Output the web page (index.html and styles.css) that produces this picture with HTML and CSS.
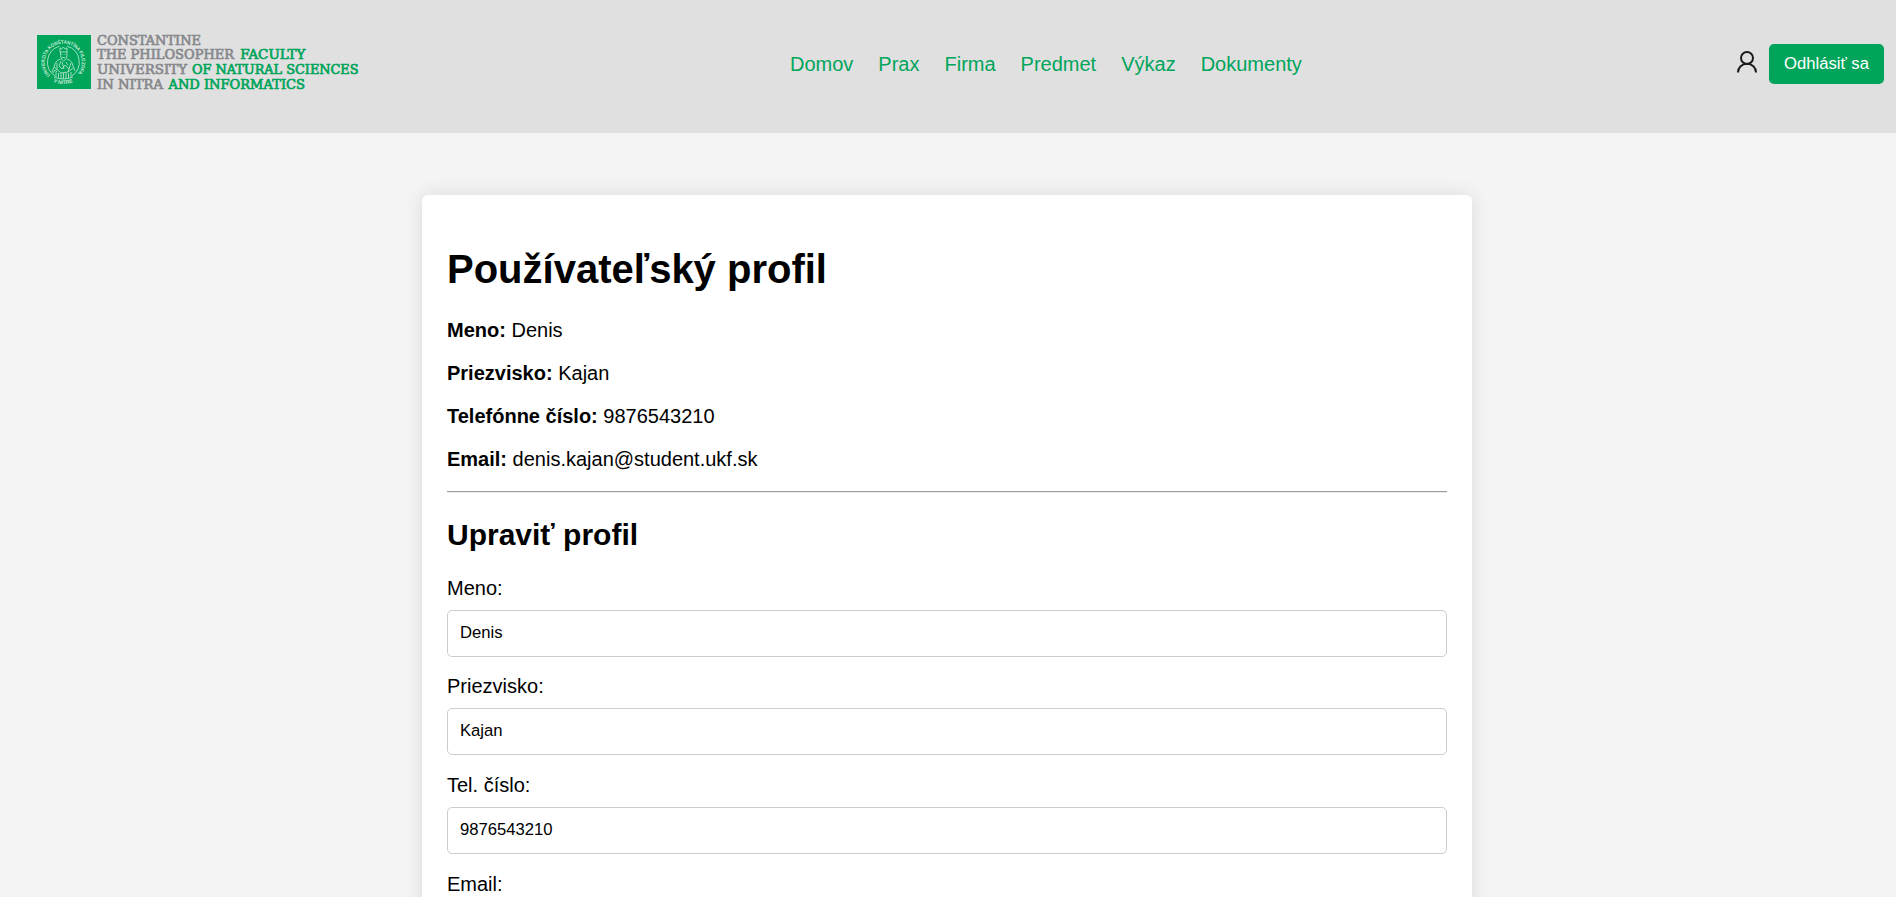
FILE: index.html
```html
<!DOCTYPE html>
<html lang="sk">
<head>
<meta charset="utf-8">
<title>Používateľský profil</title>
<link rel="stylesheet" href="styles.css">
</head>
<body>
<header class="header">
  <svg class="logo" width="330" height="60" viewBox="0 0 330 60">
    <defs>
      <path id="ring" d="M13.2 40.2A18.5 18.5 0 1 1 39.4 40.2"/>
      <path id="ring-bottom" d="M13 44.6A22 22 0 0 0 39.5 44.6"/>
    </defs>
    <rect width="54" height="54" y="0" fill="#00a55b"/>
    <g class="seal-text">
      <text><textPath href="#ring" textLength="84" lengthAdjust="spacingAndGlyphs">UNIVERZITA KONŠTANTÍNA FILOZOFA</textPath></text>
      <text><textPath href="#ring-bottom" startOffset="4" textLength="20" lengthAdjust="spacingAndGlyphs">V NITRE</textPath></text>
    </g>
    <g class="seal-art">
      <path d="M18 41A16.6 16.6 0 0 1 22.4 11.2M30.2 11.2A16.6 16.6 0 0 1 34.8 41"/>
      <path d="M23 17V12.8L24.7 14L26.4 12L28.1 14L30 12.8V17ZM23.5 17V20.5Q24 25 26.6 26Q29.5 25 30 20.5V17M24.6 19.5H25.6M27.6 19.5H28.6M25.3 22.6H28.2"/>
      <path d="M23.5 24Q18 26 17.5 31L15 37M30 24Q35.5 26 36 31L38 36M24 26L22 31L25 34L28 30L32 34M20 28V35M34 28L31 37M17 32L24 38L31 37L36 33M25 27L27 34M29 27L31 30"/>
      <path d="M19 37V42M21.5 38V43M24 38V44M26.5 38V44M29 38V44M31.5 38V43M34 37V42M17 42Q26 46 36 42M16 38L18 35L20 37"/>
    </g>
    <g class="logo-gray">
      <text x="60" y="9.7" textLength="104" lengthAdjust="spacingAndGlyphs">CONSTANTINE</text>
      <text x="60" y="24.3" textLength="137" lengthAdjust="spacingAndGlyphs">THE PHILOSOPHER</text>
      <text x="60" y="39" textLength="90" lengthAdjust="spacingAndGlyphs">UNIVERSITY</text>
      <text x="60" y="53.7" textLength="66" lengthAdjust="spacingAndGlyphs">IN NITRA</text>
    </g>
    <g class="logo-green">
      <text x="203.3" y="24.3" textLength="65" lengthAdjust="spacingAndGlyphs">FACULTY</text>
      <text x="155" y="39" textLength="166.5" lengthAdjust="spacingAndGlyphs">OF NATURAL SCIENCES</text>
      <text x="131.5" y="53.7" textLength="136.5" lengthAdjust="spacingAndGlyphs">AND INFORMATICS</text>
    </g>
  </svg>
  <nav class="nav">
    <a href="#">Domov</a>
    <a href="#">Prax</a>
    <a href="#">Firma</a>
    <a href="#">Predmet</a>
    <a href="#">Výkaz</a>
    <a href="#">Dokumenty</a>
  </nav>
  <div class="account">
    <svg class="user-icon" width="20" height="22" viewBox="0 0 20 22">
      <circle cx="10" cy="7" r="6"/>
      <path d="M1 21.4A9 8.6 0 0 1 19 21.4"/>
    </svg>
    <button class="logout" type="button">Odhlásiť sa</button>
  </div>
</header>
<main class="card">
  <h1>Používateľský profil</h1>
  <p><strong>Meno:</strong> Denis</p>
  <p><strong>Priezvisko:</strong> Kajan</p>
  <p><strong>Telefónne číslo:</strong> 9876543210</p>
  <p><strong>Email:</strong> denis.kajan@student.ukf.sk</p>
  <hr>
  <h2>Upraviť profil</h2>
  <form>
    <label for="meno">Meno:</label>
    <input id="meno" type="text" value="Denis">
    <label for="priezvisko">Priezvisko:</label>
    <input id="priezvisko" type="text" value="Kajan">
    <label for="tel">Tel. číslo:</label>
    <input id="tel" type="text" value="9876543210">
    <label for="email">Email:</label>
  </form>
</main>
</body>
</html>
```
FILE: styles.css
```css
html {
  height: 100%;
  overflow: hidden;
}

body {
  margin: 0;
  height: 100%;
  overflow: hidden;
  background: #f4f4f4;
  font-family: "Liberation Sans", Arial, sans-serif;
  font-size: 20px;
  line-height: 23px;
  color: #000;
}

.header {
  box-sizing: border-box;
  height: 133px;
  padding: 35px 12px 0 37px;
  display: grid;
  grid-template-columns: 753px 1fr auto;
  align-items: start;
  background: #e0e0e0;
}

.logo {
  overflow: visible;
}

.logo-gray,
.logo-green {
  font-family: "DejaVu Serif", serif;
  font-size: 13px;
  stroke-width: 0.7;
}

.logo-gray {
  fill: #88898d;
  stroke: #88898d;
}

.logo-green {
  fill: #00a55b;
  stroke: #00a55b;
}

.seal-text {
  font-family: "Liberation Sans", sans-serif;
  font-size: 5px;
  font-weight: bold;
  fill: #c9ebd9;
}

.seal-art {
  fill: none;
  stroke: #c5ead7;
  stroke-width: 0.8;
}

.nav {
  display: flex;
  gap: 25px;
  padding-top: 18px;
}

.nav a {
  color: #00a55b;
  text-decoration: none;
}

.account {
  display: flex;
  gap: 12px;
  padding-top: 9px;
}

.user-icon {
  margin-top: 7px;
  fill: none;
  stroke: #1c1c1c;
  stroke-width: 2;
}

.logout {
  width: 115px;
  height: 40px;
  padding: 0 0 1px;
  border: 0;
  border-radius: 5px;
  background: #00a55b;
  color: #fff;
  font: 16.67px "Liberation Sans", Arial, sans-serif;
}

.card {
  box-sizing: border-box;
  width: 1050px;
  height: 900px;
  margin: 62px 0 0 422px;
  padding: 25px;
  border-radius: 6px;
  background: #fff;
  box-shadow: 0 0 19px rgba(0, 0, 0, 0.1);
}

h1 {
  margin: 26px 0 27px;
  font-size: 40px;
  line-height: 46px;
}

p {
  margin: 0 0 20px;
}

hr {
  margin: 0 0 25px;
  border: 0;
  border-top: 1px solid #9a9a9a;
  border-bottom: 1px solid #eee;
}

h2 {
  margin: 0 0 24.7px;
  font-size: 30px;
  line-height: 34px;
}

label {
  display: block;
  margin-bottom: 10px;
}

input {
  display: block;
  box-sizing: border-box;
  width: 1000px;
  height: 46.85px;
  margin-bottom: 18.8px;
  padding: 0 12px 1px;
  border: 1px solid #ccc;
  border-radius: 5px;
  background: #fff;
  color: #000;
  font: 16.67px "Liberation Sans", Arial, sans-serif;
}
```
